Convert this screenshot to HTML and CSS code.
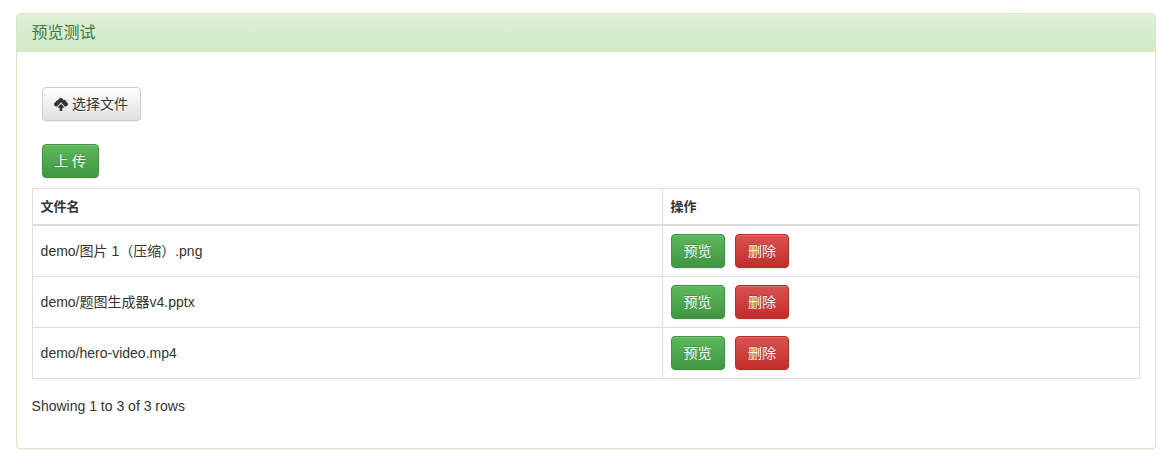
FILE: index.html
```html
<!DOCTYPE html>
<html lang="zh">
<head>
    <meta charset="UTF-8">
    <title>预览测试</title>
    <link rel="stylesheet" href="styles.css">
</head>
<body>
    <div class="panel">
        <div class="panel-heading">预览测试</div>
        <div class="panel-body">
            <div class="upload-form">
                <div class="form-row">
                    <button type="button" class="btn btn-default">
                        <svg class="icon" viewBox="0 0 14 14" width="14" height="14">
                            <path d="M7 1C5.4 1 4.2 2 3.8 3.4 3.5 3.3 3.2 3.3 3 3.4 2.2 3.6 1.7 4.3 1.7 5 .7 5.4 0 6.3 0 7.2 0 8.4 1 9.4 2.2 9.4H3.2L7 5.2 10.8 9.4H11.8C13 9.4 14 8.4 14 7.2 14 6.1 13.2 5.2 12.2 5 12.2 3.7 11.2 2.8 10 2.8 9.7 2.8 9.5 2.8 9.3 2.9 8.8 1.8 8 1 7 1Z"/>
                            <path d="M7 6.8 3.3 10.8H5.7V14H8.3V10.8H10.7Z"/>
                        </svg>
                        选择文件
                    </button>
                </div>
                <div class="form-row">
                    <button type="button" class="btn btn-success btn-upload">上 传</button>
                </div>
            </div>
            <table class="file-table">
                <thead>
                    <tr>
                        <th class="col-name">文件名</th>
                        <th>操作</th>
                    </tr>
                </thead>
                <tbody>
                    <tr>
                        <td>demo/图片 1（压缩）.png</td>
                        <td class="actions">
                            <button type="button" class="btn btn-success">预览</button>
                            <button type="button" class="btn btn-danger">删除</button>
                        </td>
                    </tr>
                    <tr>
                        <td>demo/题图生成器v4.pptx</td>
                        <td class="actions">
                            <button type="button" class="btn btn-success">预览</button>
                            <button type="button" class="btn btn-danger">删除</button>
                        </td>
                    </tr>
                    <tr>
                        <td>demo/hero-video.mp4</td>
                        <td class="actions">
                            <button type="button" class="btn btn-success">预览</button>
                            <button type="button" class="btn btn-danger">删除</button>
                        </td>
                    </tr>
                </tbody>
            </table>
            <div class="pagination-info">Showing 1 to 3 of 3 rows</div>
        </div>
    </div>
</body>
</html>
```

FILE: styles.css
```css
* {
    box-sizing: border-box;
}

body {
    font-family: "Liberation Sans", "Noto Sans CJK SC", sans-serif;
    font-size: 14px;
    line-height: 20px;
    margin: 0;
    padding: 13px 14.4px 17px 15.6px;
    background: #fff;
    color: #333;
}

.panel {
    height: 436px;
    background: #fff;
    border: 1px solid #d6e9c6;
    border-radius: 4px;
    box-shadow: 0 1px 1px rgba(0, 0, 0, 0.05);
}

.panel-heading {
    height: 38px;
    padding: 9px 15px;
    font-size: 16px;
    line-height: 20px;
    color: #3c763d;
    background: linear-gradient(to bottom, #dff0d8, #d0e9c6);
    border-radius: 3px 3px 0 0;
}

.panel-body {
    padding: 35px 15px 0;
}

.upload-form {
    padding-left: 10px;
}

.form-row {
    display: flex;
    margin-bottom: 23px;
}

.form-row:last-child {
    margin-bottom: 10px;
}

.btn {
    display: inline-flex;
    align-items: center;
    justify-content: center;
    height: 34px;
    padding: 6px 0;
    font-family: inherit;
    font-size: 14px;
    line-height: 20px;
    white-space: nowrap;
    border: 1px solid transparent;
    border-radius: 4px;
    cursor: pointer;
    box-shadow: inset 0 1px 0 rgba(255, 255, 255, 0.15), 0 1px 1px rgba(0, 0, 0, 0.075);
}

.btn-default {
    width: 99px;
    color: #333;
    text-shadow: 0 1px 0 #fff;
    background: linear-gradient(to bottom, #fff, #e0e0e0);
    border-color: #ccc;
}

.btn-success {
    width: 54px;
    color: #fff;
    text-shadow: 0 -1px 0 rgba(0, 0, 0, 0.2);
    background: linear-gradient(to bottom, #5cb85c, #419641);
    border-color: #3e8f3e;
}

.btn-upload {
    width: 57px;
}

.btn-danger {
    width: 54px;
    color: #fff;
    text-shadow: 0 -1px 0 rgba(0, 0, 0, 0.2);
    background: linear-gradient(to bottom, #d9534f, #c12e2a);
    border-color: #b92c28;
}

.icon {
    flex-shrink: 0;
    margin-right: 4px;
    fill: #333;
}

.file-table {
    width: 100%;
    border-collapse: collapse;
    table-layout: fixed;
}

.file-table th,
.file-table td {
    padding: 8px;
    text-align: left;
    vertical-align: middle;
    border: 1px solid #ddd;
}

.file-table th {
    height: 36px;
    padding-bottom: 7px;
    font-size: 13px;
    border-bottom-width: 2px;
}

.file-table td {
    height: 51px;
}

.col-name {
    width: 630px;
}

.actions .btn-danger {
    margin-left: 6.5px;
}

.pagination-info {
    margin-top: 17px;
}
```
